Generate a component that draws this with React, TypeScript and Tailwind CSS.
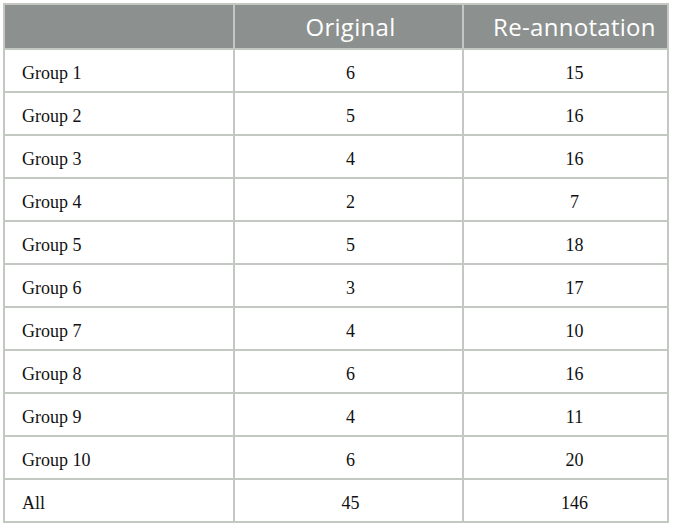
import React from "react";

const rows: [string, string, string][] = [
  ["Group 1", "6", "15"],
  ["Group 2", "5", "16"],
  ["Group 3", "4", "16"],
  ["Group 4", "2", "7"],
  ["Group 5", "5", "18"],
  ["Group 6", "3", "17"],
  ["Group 7", "4", "10"],
  ["Group 8", "6", "16"],
  ["Group 9", "4", "11"],
  ["Group 10", "6", "20"],
  ["All", "45", "146"],
];

export default function App() {
  return (
    <div className="w-[673px] h-[528px] bg-white pt-[3px] pl-[3px]">
      <table className="border-collapse table-fixed w-[664px]">
        <colgroup>
          <col className="w-[230px]" />
          <col className="w-[229px]" />
          <col className="w-[205px]" />
        </colgroup>
        <thead>
          <tr className="h-[45px] bg-[#8c9190] text-white text-[24px] tracking-[0.3px] font-['Open_Sans',sans-serif]">
            <th className="border-2 border-[#c3c8c3] font-normal"></th>
            <th className="border-2 border-[#c3c8c3] font-normal text-center pl-[4px] pt-[1px]">Original</th>
            <th className="border-2 border-[#c3c8c3] font-normal text-center pl-[18px] pt-[1px]">Re-annotation</th>
          </tr>
        </thead>
        <tbody className="font-['Liberation_Serif',serif] text-[18px] text-[#111]">
          {rows.map((r) => (
            <tr key={r[0]} className="h-[43px]">
              <td className="border-2 border-[#c3c8c3] pl-[17px] pt-[5px]">{r[0]}</td>
              <td className="border-2 border-[#c3c8c3] text-center pl-[4px] pt-[5px]">{r[1]}</td>
              <td className="border-2 border-[#c3c8c3] text-center pl-[18px] pt-[5px]">{r[2]}</td>
            </tr>
          ))}
        </tbody>
      </table>
    </div>
  );
}
